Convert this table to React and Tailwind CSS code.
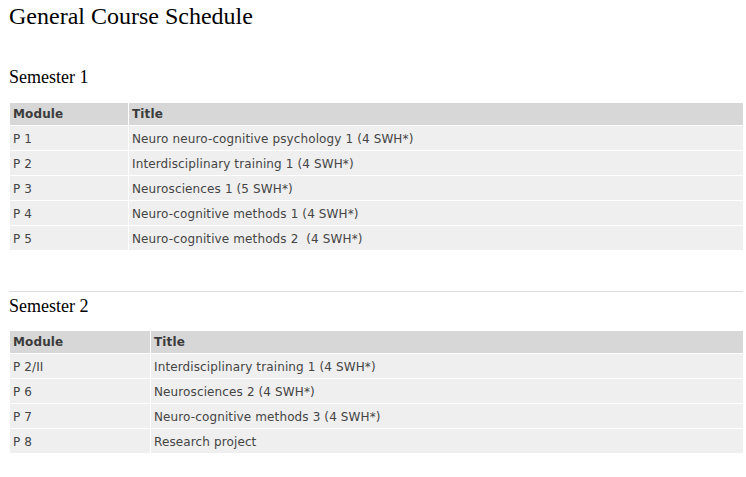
import React from "react";

const sem1 = [
  ["P 1", "Neuro neuro-cognitive psychology 1 (4 SWH*)"],
  ["P 2", "Interdisciplinary training 1 (4 SWH*)"],
  ["P 3", "Neurosciences 1 (5 SWH*)"],
  ["P 4", "Neuro-cognitive methods 1 (4 SWH*)"],
  ["P 5", "Neuro-cognitive methods 2\u00a0 (4 SWH*)"],
];
const sem2 = [
  ["P 2/II", "Interdisciplinary training 1 (4 SWH*)"],
  ["P 6", "Neurosciences 2 (4 SWH*)"],
  ["P 7", "Neuro-cognitive methods 3 (4 SWH*)"],
  ["P 8", "Research project"],
];

function Table({ rows, cols }) {
  return (
    <div className={`grid ${cols} gap-px w-[733px] ml-[10px] font-['DejaVu_Sans',sans-serif] text-[12px] tracking-[0.12px]`}>
      <div className="bg-[#d7d7d7] h-[22px] flex items-center pl-[3px] font-bold text-[#3c3c3c]">Module</div>
      <div className="bg-[#d7d7d7] h-[22px] flex items-center pl-[3px] font-bold text-[#3c3c3c]">Title</div>
      {rows.map(([m, t]) => (
        <React.Fragment key={m}>
          <div className="bg-[#efefef] h-[24px] flex items-center pl-[3px] pt-px text-[#444]">{m}</div>
          <div className="bg-[#efefef] h-[24px] flex items-center pl-[3px] pt-px text-[#444]">{t}</div>
        </React.Fragment>
      ))}
    </div>
  );
}

export default function App() {
  return (
    <div className="bg-white w-[746px] h-[477px] flex flex-col font-['Liberation_Serif',serif] text-black">
      <h1 className="text-[24px] leading-[32px] ml-[9px]">General Course Schedule</h1>
      <h2 className="text-[18px] leading-[20px] ml-[9px] mt-[35px]">Semester 1</h2>
      <div className="mt-[16px]">
        <Table rows={sem1} cols="grid-cols-[118px_1fr]" />
      </div>
      <hr className="mt-[41px] ml-[9px] w-[734px] border-0 border-t border-[#dddddd]" />
      <h2 className="text-[18px] leading-[20px] ml-[9px] mt-[4px]">Semester 2</h2>
      <div className="mt-[15px]">
        <Table rows={sem2} cols="grid-cols-[140px_1fr]" />
      </div>
    </div>
  );
}
